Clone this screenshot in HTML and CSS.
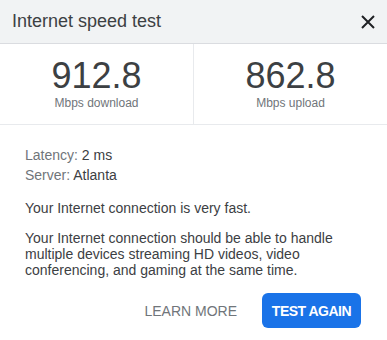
FILE: index.html
```html
<!DOCTYPE html>
<html>
<head>
<meta charset="utf-8">
<link rel="stylesheet" href="styles.css">
</head>
<body>
<div class="dialog">
  <header class="head">
    <span class="title">Internet speed test</span>
    <button class="close" aria-label="Close">
      <svg width="14" height="14" viewBox="0 0 14 14"><path d="M1 1L13 13M13 1L1 13" stroke="#202124" stroke-width="2" fill="none"/></svg>
    </button>
  </header>
  <section class="stats">
    <div class="stat">
      <div class="num">912.8</div>
      <div class="unit">Mbps download</div>
    </div>
    <div class="stat">
      <div class="num">862.8</div>
      <div class="unit">Mbps upload</div>
    </div>
  </section>
  <section class="body">
    <div class="meta">
      <div><span class="k">Latency:</span> 2 ms</div>
      <div><span class="k">Server:</span> Atlanta</div>
    </div>
    <p class="p">Your Internet connection is very fast.</p>
    <p class="p">Your Internet connection should be able to handle multiple devices streaming HD videos, video conferencing, and gaming at the same time.</p>
    <div class="actions">
      <button class="link">LEARN MORE</button>
      <button class="primary">TEST AGAIN</button>
    </div>
  </section>
</div>
</body>
</html>
```
FILE: styles.css
```css
* { box-sizing: border-box; }
html, body { margin: 0; padding: 0; background: #fff; }
body { font-family: "Liberation Sans", Arial, sans-serif; color: #3c4043; }
.dialog { width: 387px; height: 340px; display: flex; flex-direction: column; }
.head {
  height: 44px; background: #f1f3f4; border-bottom: 1px solid #dadce0;
  display: flex; align-items: center; justify-content: space-between;
  padding: 0 12px 0 12px;
}
.title { font-size: 18px; color: #3c4043; }
.close { border: 0; background: none; padding: 0; width: 14px; height: 14px; display: flex; cursor: pointer; }
.stats { display: flex; border-bottom: 1px solid #e8eaed; }
.stat { flex: 1; text-align: center; padding: 12px 0 14px; }
.stat + .stat { border-left: 1px solid #e8eaed; }
.num { font-size: 36px; line-height: 40px; color: #3c4043; }
.unit { font-size: 12px; line-height: 14px; color: #70757a; }
.body { padding: 20px 24px 0 25px; font-size: 14px; flex: 1; display: flex; flex-direction: column; }
.meta { line-height: 20px; color: #3c4043; }
.k { color: #70757a; }
.p { margin: 15px 0 0; line-height: 16px; }
.p + .p { margin-top: 14px; }
.actions { display: flex; justify-content: flex-end; align-items: center; gap: 25px; margin-top: 15px; padding-right: 2px; }
.link { border: 0; background: none; padding: 0; font: 14px "Liberation Sans", Arial, sans-serif; color: #70757a; }
.primary {
  border: 0; background: #1a73e8; color: #fff; border-radius: 6px;
  width: 99px; height: 35px; padding: 0;
  font: bold 14px "Liberation Sans", Arial, sans-serif; letter-spacing: -0.5px;
}
```
